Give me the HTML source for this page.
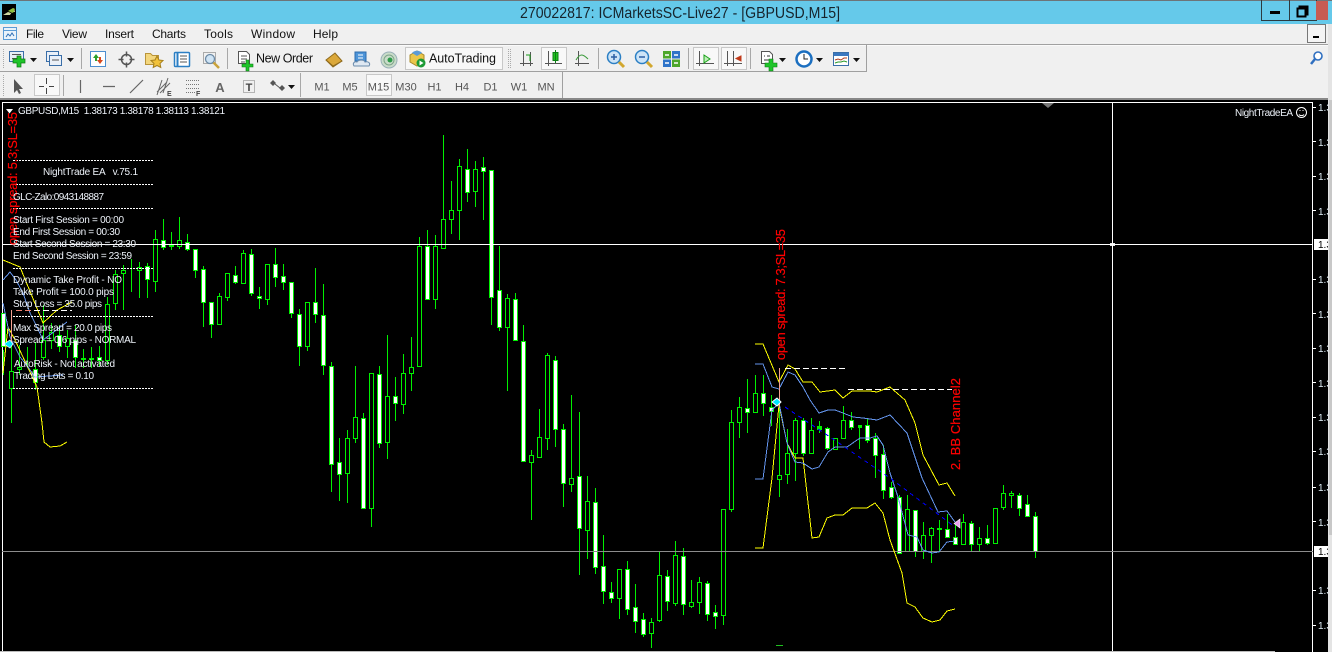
<!DOCTYPE html>
<html><head><meta charset="utf-8"><title>MT4</title>
<style>html,body{margin:0;padding:0;background:#000;overflow:hidden}svg{display:block}text{font-family:"Liberation Sans",sans-serif}</style></head>
<body>
<svg xmlns="http://www.w3.org/2000/svg" width="1332" height="652" viewBox="0 0 1332 652">
<!-- window chrome -->
<rect width="1332" height="652" fill="#000"/>
<rect width="1332" height="24" fill="#65c9ea"/>
<rect width="1332" height="1" fill="#6d7478"/>
<rect y="24" width="1332" height="74" fill="#f0f0f0"/>
<rect x="2" y="4" width="14" height="16" fill="#000"/>
<path d="M3 15l5-3 3 1 3-5 1 4h-3l-2 3z" fill="#cfd8a0"/><path d="M8 11l5-3 2 1-2 4z" fill="#8fbf3f"/>
<text x="520" y="18" font-size="16" fill="#16242c" textLength="320" lengthAdjust="spacingAndGlyphs">270022817: ICMarketsSC-Live27 - [GBPUSD,M15]</text>
<path d="M1261.5 0V20.5H1316.5V0M1289.5 0V20.5" fill="none" stroke="#2c3a40"/>
<rect x="1270" y="11" width="10" height="3" fill="#000"/>
<path d="M1299.5 6.500h8v8h-2v-6h-6zM1297.500 8.500h8v8h-8z" fill="none" stroke="#000" stroke-width="2"/>
<rect x="1316" y="1" width="12" height="19" fill="#c75b52"/>
<rect x="1328" y="1" width="4" height="23" fill="#65c9ea"/>
<rect x="1307.500" y="24.500" width="18" height="18" fill="#f4f4f4" stroke="#777"/>
<rect x="1313" y="36" width="6" height="2" fill="#000"/>
<rect y="44" width="1332" height="1" fill="#a0a0a0"/>
<rect y="45" width="1332" height="1" fill="#fafafa"/>
<rect y="71" width="866" height="1" fill="#a0a0a0"/>
<rect x="866" y="45" width="1" height="27" fill="#a0a0a0"/>
<rect x="562" y="72" width="1" height="26" fill="#a0a0a0"/>
<rect y="98" width="1332" height="2" fill="#888"/>
<!-- menu -->
<g font-size="12" fill="#111">
<text x="26" y="38" textLength="18">File</text>
<text x="62" y="38" textLength="25">View</text>
<text x="105" y="38" textLength="29">Insert</text>
<text x="152" y="38" textLength="34">Charts</text>
<text x="204" y="38" textLength="29">Tools</text>
<text x="251" y="38" textLength="44">Window</text>
<text x="313" y="38" textLength="25">Help</text>
</g>
<rect x="3.500" y="27.500" width="13" height="12" fill="#eaf3fb" stroke="#5b9bd5"/><path d="M3 30.500h14" stroke="#5b9bd5"/><path d="M6 37l2-3 2 2 2-3 2 3" fill="none" stroke="#2f6fb5"/>
<!-- toolbar row 1 -->
<path d="M3.500 49V69M3.500 75V96" stroke="#aaa" stroke-dasharray="1 1"/>
<g fill="none">
<rect x="9.500" y="51.500" width="14" height="10" fill="#e6eff8" stroke="#3a6ea8"/><path d="M12 54.500h9M12 58.500h6" stroke="#555"/><path d="M17 56h4v3h4v4h-4v4h-4v-4h-4v-4h4z" fill="#1fc52a" stroke="#0d7a14" stroke-width=".7"/>
<path d="M30 58h7l-3.500 4z" fill="#111"/>
<rect x="46.500" y="51.500" width="12" height="10" fill="#eaf0f8" stroke="#3a6ea8"/><rect x="49.500" y="55.500" width="12" height="10" fill="#eaf0f8" stroke="#3a6ea8"/><path d="M52 60h7" stroke="#555"/>
<path d="M67 58h7l-3.500 4z" fill="#111"/>
<path d="M81.500 48V69M227.500 48V69M598.500 48V69M688.500 48V69M750.500 48V69" stroke="#a8a8a8"/>
<rect x="90.500" y="51.500" width="15" height="15" fill="#fff" stroke="#4d8fd0"/><path d="M96 54l-3 4h2v3h2v-3h2z" fill="#2ca02c"/><path d="M100 64l3-4h-2v-3h-2v3h-2z" fill="#d9481c"/>
<circle cx="126.500" cy="59.500" r="5" stroke="#555" stroke-width="1.500"/><path d="M126.500 51.500v5M126.500 62.500v5M118.500 59.500h5M129.500 59.500h5" stroke="#555" stroke-width="1.500"/>
<path d="M145.500 53.500h5l2 2h6v9h-13z" fill="#f3d67d" stroke="#b9943a"/><path d="M157 56l2 4 4 .5-3 3 .8 4-3.800-2-3.800 2 .8-4-3-3 4-.5z" fill="#f2c23a" stroke="#a67f1c"/>
<rect x="174.500" y="52.500" width="15" height="14" rx="1" fill="#fff" stroke="#2b7fc4" stroke-width="1.500"/><path d="M177.500 53v13" stroke="#2b7fc4" stroke-width="2"/><path d="M180 56h7M180 59h7M180 62h7" stroke="#555"/>
<rect x="203.500" y="52.500" width="12" height="11" fill="#f0f0f0" stroke="#aaa"/><circle cx="210" cy="59" r="4.500" fill="#cfe4f5" stroke="#6d8aa5" stroke-width="1.300"/><path d="M213.500 62.500l5.500 5.500" stroke="#c9a23a" stroke-width="2.500"/>
<path d="M238.500 51.500h8l3 3v9h-11z" fill="#fff" stroke="#555"/><path d="M241 56h6M241 59h6M241 62h4" stroke="#555"/><path d="M246 60h3v4h4v3h-4v4h-3v-4h-4v-3h4z" fill="#1fc52a" stroke="#0d7a14" stroke-width=".6"/>
</g>
<text x="256" y="62.500" font-size="12.500" fill="#111" textLength="57">New Order</text>
<path d="M326 60l9-7 7 8-9 5z" fill="#dba83a" stroke="#8f6a1c"/><path d="M326 60l7 7 9-6" fill="none" stroke="#8f6a1c"/>
<path d="M355 52h11v9h-11z" fill="#4d94d8" stroke="#2b6cae"/><path d="M354 66c-2-3 1-5 3-4 1-2 7-3 8 0 3-1 6 1 4 4z" fill="#dfe8f2" stroke="#6b8bab"/><path d="M358 55h5M358 58h5" stroke="#fff"/>
<circle cx="389" cy="60" r="8" fill="#c9dcc9" stroke="#9ab0b8"/><circle cx="389" cy="60" r="5" fill="none" stroke="#7fa48a"/><circle cx="390" cy="60" r="2.500" fill="#2e9b4a"/>
<rect x="405.500" y="47.500" width="97" height="22" fill="#f8f8f8" stroke="#c8c8c8"/>
<path d="M410 55l7-4 7 4v7l-7 4-7-4z" fill="#eac64a" stroke="#a88a2a"/><path d="M412 53c2-3 8-3 10 0l-5 3z" fill="#5b9bd5"/><circle cx="421" cy="63" r="4.500" fill="#1c9a35"/><path d="M419.500 60.500l4 2.500-4 2.500z" fill="#fff"/>
<text x="429" y="62.500" font-size="12.500" fill="#111" textLength="67">AutoTrading</text>
<path d="M508.500 49V69M510.500 49V69" stroke="#aaa" stroke-dasharray="1 1"/>
<!-- chart modes -->
<rect x="541.500" y="47.500" width="25" height="22" fill="#f8f8f8" stroke="#c8c8c8"/>
<rect x="693.500" y="47.500" width="25" height="22" fill="#f8f8f8" stroke="#c8c8c8"/>
<rect x="721.500" y="47.500" width="25" height="22" fill="#f8f8f8" stroke="#c8c8c8"/>
<g fill="none" stroke="#555">
<path d="M523.500 51V66M520 63.500H533M530.500 66V52"/><path d="M526 55h4v6" stroke="#1a9a1a"/>
<path d="M548.500 51V66M545 63.500H562"/><rect x="553" y="52.500" width="5" height="8" fill="#1fc21f" stroke="#0b7f12"/><path d="M555.500 50v13" stroke="#0b7f12"/>
<path d="M578.500 51V66M575 63.500H589"/><path d="M576 60c4-7 7-6 12-1" stroke="#3a9a3a"/>
<path d="M699.500 51V66M696 63.500H714"/><path d="M704 55l6 4-6 4z" fill="#bff0b8" stroke="#18a018"/>
<path d="M727.500 51V66M724 63.500H742M733.500 51V66"/><path d="M741 58l-5 2.500 5 2.500z" fill="#c03a1a" stroke="#c03a1a" transform="translate(0 -2)"/>
</g>
<g fill="none">
<circle cx="614" cy="57" r="6.500" fill="#cde4f7" stroke="#2b7fc4" stroke-width="1.500"/><path d="M611 57h6M614 54v6" stroke="#2b5fa4" stroke-width="1.500"/><path d="M619 62l5 5" stroke="#d2a72f" stroke-width="3"/>
<circle cx="642" cy="57" r="6.500" fill="#cde4f7" stroke="#2b7fc4" stroke-width="1.500"/><path d="M639 57h6" stroke="#2b5fa4" stroke-width="1.500"/><path d="M647 62l5 5" stroke="#d2a72f" stroke-width="3"/>
<rect x="663" y="51" width="8" height="7.500" fill="#4ea72c"/><rect x="672" y="51" width="8" height="7.500" fill="#2f74c9"/><rect x="663" y="59.500" width="8" height="7.500" fill="#2f74c9"/><rect x="672" y="59.500" width="8" height="7.500" fill="#4ea72c"/>
<path d="M665 55h4M674 55h4M665 63h4M674 63h4" stroke="#fff" stroke-width="1.500"/>
<path d="M761.500 51.500h8l3 3v9h-11z" fill="#fff" stroke="#555"/><path d="M764 56h1M767 56h3M764 60h6" stroke="#333"/><path d="M769 59h4v4h4v4h-4v4h-4v-4h-4v-4h4z" fill="#1fc52a" stroke="#0d7a14" stroke-width=".6"/>
<circle cx="804" cy="59" r="7.500" fill="#fff" stroke="#1c6fc0" stroke-width="2.500"/><path d="M804 54v5h4" stroke="#222"/>
<rect x="833.500" y="52.500" width="15" height="13" fill="#fff" stroke="#3a6ea8"/><rect x="834" y="53" width="15" height="3" fill="#3a78c0"/><path d="M835 60l3-1 3 1 3-2 3 0" stroke="#b03a1a"/><path d="M835 63l3-1 3 0 3-1 3 1" stroke="#2a9a2a"/>
</g>
<path d="M779 58h7l-3.500 4zM816 58h7l-3.500 4zM853 58h7l-3.500 4z" fill="#111"/>
<circle cx="1318" cy="56" r="4" fill="#fff" stroke="#2f6fc0" stroke-width="1.600"/><path d="M1315 59l-4 5" stroke="#2f6fc0" stroke-width="2.500"/>
<!-- toolbar row 2 -->
<rect x="34.500" y="74.500" width="25" height="21" fill="#f8f8f8" stroke="#c8c8c8"/>
<rect x="366.500" y="74.500" width="25" height="21" fill="#f8f8f8" stroke="#c8c8c8"/>
<path d="M14 79l0 14 3-3 2 4 2-1-2-4h4z" fill="#555"/>
<path d="M46.500 78v6M46.500 88v6M39 86.500h5M49 86.500h5" stroke="#444" fill="none"/>
<path d="M63.500 75V96M300.500 73V97" stroke="#a8a8a8"/>
<path d="M80.500 80V93M103 86.500H115M130 93l13-13" stroke="#666" stroke-width="1.200" fill="none"/>
<path d="M157 92l10-10M160 93l10-10M162 80l-5 15M168 78l-5 15" stroke="#666" fill="none"/><text x="167" y="96" font-size="7" font-weight="bold" fill="#444">E</text>
<path d="M186 80.500h13M186 84.500h13M186 88.500h13M186 92.500h9" stroke="#777" stroke-dasharray="1 1"/><text x="196" y="96" font-size="7" font-weight="bold" fill="#444">F</text>
<text x="220" y="92" font-size="13" font-weight="bold" fill="#666" text-anchor="middle">A</text>
<rect x="243.500" y="80.500" width="11" height="12" fill="none" stroke="#777" stroke-dasharray="1 1"/><text x="249" y="91" font-size="11" font-weight="bold" fill="#444" text-anchor="middle">T</text>
<path d="M273 80l3 3-3 3-3-3zM282 85l3 3-3 3-3-3z" fill="#555"/><path d="M275 84l5 4" stroke="#555"/>
<path d="M288 85h7l-3.500 4z" fill="#111"/>
<g font-size="11" fill="#555" text-anchor="middle">
<text x="322" y="90.500">M1</text><text x="350" y="90.500">M5</text><text x="378.500" y="90.500">M15</text><text x="406" y="90.500">M30</text><text x="434.500" y="90.500">H1</text><text x="462" y="90.500">H4</text><text x="490.500" y="90.500">D1</text><text x="519" y="90.500">W1</text><text x="546" y="90.500">MN</text>
</g>
<!-- chart frame -->
<rect x="1328" y="24" width="4" height="628" fill="#e4e4e4"/>
<path d="M2.500 102V652M2 102.500H1313M1312.500 102V652M1112.500 103V652" stroke="#fff" fill="none" shape-rendering="crispEdges"/>
<rect y="651" width="1275" height="1" fill="#bbb"/>
<path d="M1042 103h12l-6 5z" fill="#777"/>
<rect x="776" y="645" width="7" height="1" fill="#1fc21f"/>
<!-- candles -->
<g shape-rendering="crispEdges">
<path fill="none" stroke="#00f000" d="M3.500 350V375M11.500 345V423M19.500 345V375M27.500 347V368M35.500 342V390M43.500 305V360M51.500 323V349M59.500 325V352M67.500 330V358M75.500 325V368M83.500 349V368M91.500 347V368M99.500 346V367M107.500 297V365M115.500 270V310M123.500 265V310M131.500 259V292M139.500 262V298M147.500 263V298M155.500 230V292M163.500 219V250M171.500 232V250M179.500 217V249M187.500 234V251M195.500 249V278M203.500 266V327M211.500 302V338M219.500 293V325M227.500 273V301M235.500 266V284M243.500 250V283M251.500 249V296M259.500 287V309M267.500 264V305M275.500 248V287M283.500 264V290M291.500 282V318M299.500 309V366M307.500 302V351M315.500 268V323M323.500 284V375M331.500 362V492M339.500 438V501M347.500 430V503M355.500 366V443M363.500 413V508M371.500 373V527M379.500 366V448M387.500 335V459M395.500 377V421M403.500 354V414M411.500 337V391M419.500 237V366M427.500 230V299M435.500 235V309M443.500 135V248M451.500 181V234M459.500 159V240M467.500 149V202M475.500 161V207M483.500 157V220M491.500 170V325M499.500 246V331M507.500 294V391M515.500 293V340M523.500 325V461M531.500 450V520M539.500 409V457M547.500 353V450M555.500 356V447M563.500 424V507M571.500 395V492M579.500 412V575M587.500 476V559M595.500 488V574M603.500 535V604M611.500 582V603M619.500 569V619M627.500 561V615M635.500 584V633M643.500 613V637M651.500 618V648M659.500 552V622M667.500 570V611M675.500 541V606M683.500 548V615M691.500 580V608M699.500 577V614M707.500 581V621M715.500 605V629M723.500 509V625M731.500 410V512M739.500 397V438M747.500 379V433M755.500 375V413M763.500 375V416M771.500 395V426M779.500 400V497M787.500 429V484M795.500 418V481M803.500 418V456M811.500 418V453M819.500 421V433M827.500 427V450M835.500 438V449M843.500 406V438M851.500 412V430M859.500 426V449M867.500 419V443M875.500 433V478M883.500 445V499M891.500 482V499M899.500 495V553M907.500 495V551M915.500 510V557M923.500 522V559M931.500 527V563M939.500 520V551M947.500 514V537M955.500 525V544M963.500 514V544M971.500 521V551M979.500 527V551M987.500 525V545M995.500 508V544M1003.500 485V510M1011.500 491V508M1019.500 493V516M1027.500 495V517M1035.500 512V558"/>
<!-- hollow bodies -->
<path fill="#000" stroke="#00f000" d="M9.500 371.500h4v17h-4zM17.500 367.500h4v2h-4zM41.500 340.500h4v17h-4zM49.500 332.500h4v8h-4zM65.500 338.500h4v8h-4zM105.500 304.500h4v56h-4zM113.500 274.500h4v29h-4zM121.500 270.500h4v3h-4zM137.500 267.500h4v3h-4zM153.500 239.500h4v42h-4zM177.500 240.500h4v6h-4zM217.500 296.500h4v28h-4zM225.500 273.500h4v24h-4zM241.500 253.500h4v30h-4zM265.500 264.500h4v35h-4zM305.500 302.500h4v44h-4zM345.500 438.500h4v35h-4zM353.500 417.500h4v21h-4zM369.500 373.500h4v135h-4zM385.500 396.500h4v46h-4zM401.500 373.500h4v31h-4zM409.500 367.500h4v6h-4zM417.500 246.500h4v120h-4zM433.500 246.500h4v53h-4zM441.500 219.500h4v29h-4zM449.500 210.500h4v9h-4zM457.500 166.500h4v44h-4zM473.500 169.500h4v22h-4zM505.500 298.500h4v29h-4zM529.500 455.500h4v7h-4zM537.500 437.500h4v20h-4zM545.500 355.500h4v83h-4zM569.500 478.500h4v6h-4zM585.500 501.500h4v29h-4zM617.500 569.500h4v29h-4zM649.500 622.500h4v11h-4zM657.500 575.500h4v45h-4zM673.500 555.500h4v48h-4zM689.500 602.500h4v4h-4zM697.500 582.500h4v20h-4zM721.500 509.500h4v106h-4zM729.500 422.500h4v87h-4zM737.500 407.500h4v15h-4zM753.500 393.500h4v19h-4zM777.500 475.500h4v4h-4zM785.500 453.500h4v21h-4zM793.500 420.500h4v33h-4zM809.500 430.500h4v23h-4zM817.500 426.500h4v3h-4zM833.500 438.500h4v11h-4zM841.500 420.500h4v18h-4zM905.500 509.500h4v42h-4zM921.500 535.500h4v16h-4zM929.500 528.500h4v7h-4zM961.500 522.500h4v22h-4zM977.500 538.500h4v6h-4zM993.500 508.500h4v35h-4zM1001.500 493.500h4v14h-4zM1009.500 493.500h4v2h-4z"/>
<!-- white bodies -->
<path fill="#fff" stroke="#00f000" d="M1.500 313.500h4v33h-4zM33.500 369.500h4v13h-4zM57.500 335.500h4v11h-4zM73.500 340.500h4v17h-4zM81.500 358.500h4v1h-4zM89.500 358.500h4v1h-4zM97.500 357.500h4v3h-4zM145.500 266.500h4v13h-4zM161.500 240.500h4v7h-4zM169.500 245.500h4v1h-4zM185.500 242.500h4v7h-4zM193.500 249.500h4v21h-4zM201.500 269.500h4v33h-4zM209.500 302.500h4v22h-4zM233.500 275.500h4v7h-4zM249.500 254.500h4v39h-4zM257.500 296.500h4v2h-4zM273.500 264.500h4v13h-4zM281.500 276.500h4v6h-4zM289.500 282.500h4v31h-4zM297.500 314.500h4v32h-4zM313.500 302.500h4v12h-4zM321.500 315.500h4v50h-4zM329.500 366.500h4v98h-4zM337.500 462.500h4v12h-4zM361.500 418.500h4v90h-4zM377.500 374.500h4v69h-4zM393.500 396.500h4v7h-4zM425.500 246.500h4v53h-4zM465.500 169.500h4v23h-4zM481.500 167.500h4v4h-4zM489.500 170.500h4v127h-4zM497.500 290.500h4v37h-4zM513.500 299.500h4v41h-4zM521.500 341.500h4v120h-4zM553.500 360.500h4v69h-4zM561.500 429.500h4v54h-4zM577.500 476.500h4v52h-4zM593.500 502.500h4v65h-4zM601.500 566.500h4v25h-4zM609.500 592.500h4v6h-4zM625.500 569.500h4v40h-4zM633.500 607.500h4v14h-4zM641.500 619.500h4v15h-4zM665.500 576.500h4v25h-4zM681.500 556.500h4v48h-4zM705.500 583.500h4v31h-4zM713.500 612.500h4v4h-4zM745.500 408.500h4v4h-4zM761.500 393.500h4v10h-4zM769.500 407.500h4v4h-4zM801.500 420.500h4v33h-4zM825.500 428.500h4v20h-4zM849.500 420.500h4v7h-4zM865.500 425.500h4v15h-4zM873.500 438.500h4v17h-4zM881.500 454.500h4v36h-4zM889.500 487.500h4v10h-4zM897.500 497.500h4v56h-4zM913.500 510.500h4v41h-4zM945.500 529.500h4v8h-4zM953.500 537.500h4v7h-4zM969.500 523.500h4v21h-4zM985.500 538.500h4v5h-4zM1017.500 495.500h4v13h-4zM1025.500 504.500h4v12h-4zM1033.500 516.500h4v35h-4z"/>
<path fill="#00f000" d="M858 425h4v3h-4zM937 528h5v2h-5zM818 426h4v3h-4z"/>
</g>
<!-- crosshair -->
<rect x="2" y="244" width="1311" height="1" fill="#fff"/>
<rect x="2" y="551" width="1311" height="1" fill="#8c8c8c"/>
<rect x="1110" y="243" width="5" height="3" fill="#fff" opacity=".9"/>
<!-- indicator lines -->
<g fill="none" stroke-width="1" shape-rendering="crispEdges">
<g stroke="#ffff00">
<path d="M3 260L20 267 43 323 57 310 72 302"/>
<path d="M3 373L8 327 15 340 37 387 42 423 44 442 50 447 60 446 67 442"/>
<path d="M755 344L763 344 779 382 788 365 795 369 803 382 812 382 820 392 835 390 843 398 852 391 870 391 877 392 890 387 905 400 915 423 923 455 939 485 947 483 955 496"/>
<path d="M755 548L763 548 772 478 779 405 787 443 795 458 803 458 812 538 819 537 827 518 835 515 843 515 852 508 867 508 875 503 883 513 890 540 902 573 907 603 915 607 923 618 932 622 940 620 947 611 955 609"/>
</g>
<g stroke="#6495ed">
<path d="M3 280L10 272 16 280 23 293 30 313 37 327 43 340 67 322"/>
<path d="M3 303L10 337 20 357 28 367 35 377 63 375"/>
<path d="M755 364L763 364 772 387 779 389 788 372 795 375 803 387 810 400 819 413 828 410 835 410 843 413 853 417 863 418 877 420 890 415 907 433 922 478 938 512 947 511 955 522"/>
<path d="M755 479L763 479 772 410 779 403 787 443 795 462 803 463 812 469 819 467 828 452 835 447 847 447 860 438 870 438 877 436 883 445 890 473 898 497 908 535 917 537 923 550 932 553 939 552 947 542 955 541"/>
</g>
<path d="M785 407L830 437 890 478 955 527" stroke="#0000ff" stroke-dasharray="4 4"/>
</g>
<!-- objects -->
<g shape-rendering="crispEdges" fill="none">
<path d="M785 368.500H847M848 389.500H952" stroke="#fff" stroke-dasharray="6 3"/>
<path d="M16 310.500H72" stroke="#fff" stroke-dasharray="6 3"/><path d="M16 310.500H32" stroke="#f08070" stroke-dasharray="6 3"/>
<path d="M11.500 310V345M779.500 368V408" stroke="#f4a090"/>
<g stroke="#fff" stroke-dasharray="2 1"><path d="M13 160.500H154M13 184.500H154M13 208.500H154M13 268.500H154M13 316.500H154M13 388.500H154"/></g>
</g>
<path d="M772 402l5-4 4 4-4 4z" fill="#00e5ff" stroke="#fff"/>
<path d="M4 344l6-4 3 4-3 4z" fill="#00e5ff" stroke="#fff" stroke-width=".7"/>
<path d="M960 519v9l-6-4.500z" fill="#e9a0f0" stroke="#fff" stroke-width=".6"/>
<!-- rotated labels -->
<g font-size="13" fill="#ff0000" stroke="#ff0000" stroke-width=".2">
<text transform="translate(17 245) rotate(-90)" textLength="133">open spread: 5.3;SL=35</text>
<text transform="translate(785 360) rotate(-90)" textLength="131">open spread: 7.3;SL=35</text>
<text transform="translate(960 470) rotate(-90)" textLength="92">2. BB Channel2</text>
</g>
<!-- header -->
<path d="M6 109h7l-3.500 4.500z" fill="#fff"/>
<g font-size="10" fill="#eef3fa">
<text x="18" y="114" textLength="207" xml:space="preserve">GBPUSD,M15  1.38173 1.38178 1.38113 1.38121</text>
<text x="1235" y="116" textLength="58">NightTradeEA</text>
<text x="43" y="175" textLength="95" xml:space="preserve">NightTrade EA   v.75.1</text>
<text x="13" y="200" textLength="91">GLC-Zalo:0943148887</text>
<text x="13" y="223" textLength="111">Start First Session = 00:00</text>
<text x="13" y="235" textLength="107">End First Session = 00:30</text>
<text x="13" y="247" textLength="123">Start Second Session = 23:30</text>
<text x="13" y="259" textLength="119">End Second Session = 23:59</text>
<text x="13" y="283" textLength="109">Dynamic Take Profit - NO</text>
<text x="13" y="295" textLength="101">Take Profit = 100.0 pips</text>
<text x="13" y="307" textLength="89">Stop Loss = 35.0 pips</text>
<text x="13" y="331" textLength="99">Max Spread = 20.0 pips</text>
<text x="13" y="343" textLength="123">Spread = 0.6 pips - NORMAL</text>
<text x="14" y="367" textLength="101">AutoRisk - Not activated</text>
<text x="14" y="379" textLength="80">Trading Lots = 0.10</text>
</g>
<circle cx="1301.500" cy="112.500" r="5" fill="none" stroke="#fff"/><path d="M1299 114.500c1 1.500 4 1.500 5 0M1299.500 110.500h1M1302.500 110.500h1" fill="none" stroke="#fff"/>
<!-- axis -->
<g fill="#fff" shape-rendering="crispEdges"><path d="M1313 107h3v1h-3zM1313 141h3v1h-3zM1313 176h3v1h-3zM1313 210h3v1h-3zM1313 279h3v1h-3zM1313 313h3v1h-3zM1313 348h3v1h-3zM1313 382h3v1h-3zM1313 417h3v1h-3zM1313 451h3v1h-3zM1313 487h3v1h-3zM1313 521h3v1h-3zM1313 590h3v1h-3zM1313 625h3v1h-3z"/></g>
<g font-size="10" fill="#e4f2fb">
<text x="1318" y="111">1.3</text><text x="1318" y="146">1.3</text><text x="1318" y="180">1.3</text><text x="1318" y="215">1.3</text><text x="1318" y="283">1.3</text><text x="1318" y="318">1.3</text><text x="1318" y="352">1.3</text><text x="1318" y="387">1.3</text><text x="1318" y="421">1.3</text><text x="1318" y="455">1.3</text><text x="1318" y="491">1.3</text><text x="1318" y="526">1.3</text><text x="1318" y="594">1.3</text><text x="1318" y="629">1.3</text>
</g>
<rect x="1314" y="239" width="14" height="11" fill="#fff"/><rect x="1314" y="546" width="14" height="11" fill="#fff"/>
<g font-size="10" fill="#000"><text x="1318" y="248">1.3</text><text x="1318" y="555">1.3</text></g>
<rect x="1328" y="100" width="4" height="552" fill="#e4e4e4"/>
<rect x="1329" y="100" width="3" height="435" fill="#c8c8c8"/>
</svg>
</body></html>
